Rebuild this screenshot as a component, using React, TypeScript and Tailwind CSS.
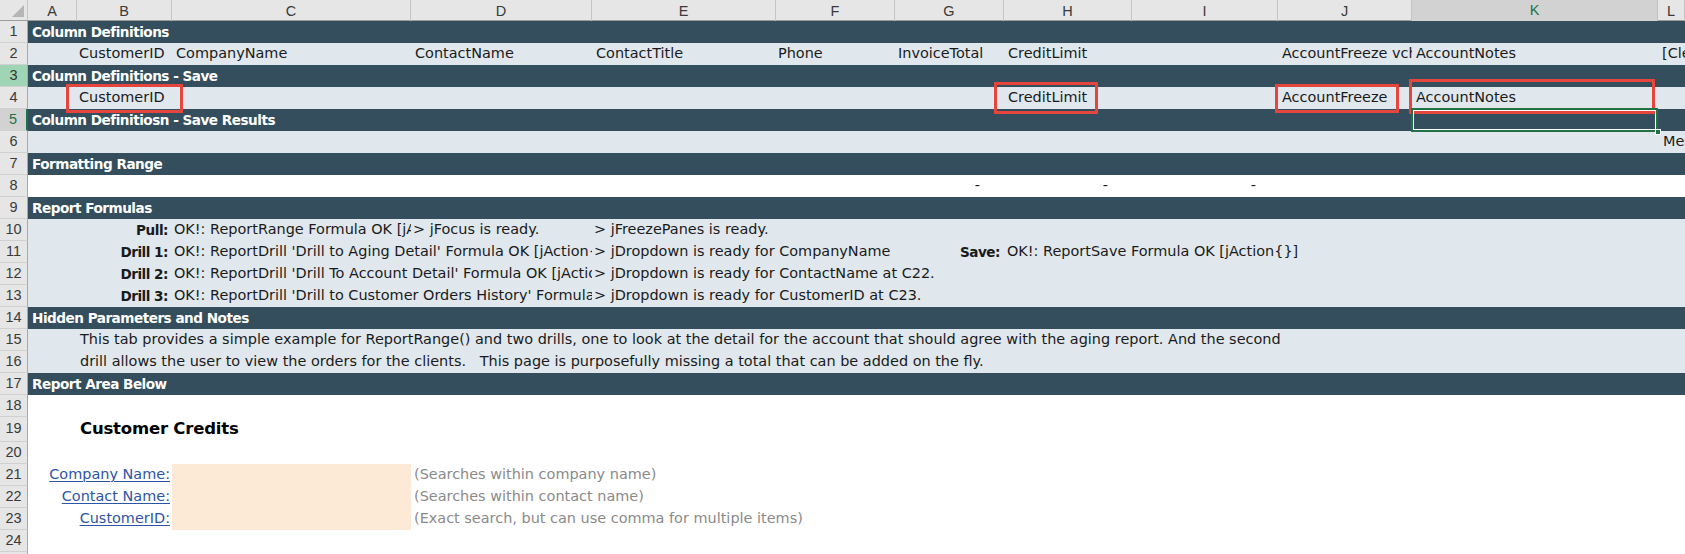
import React from "react";

const COLS =
  "grid grid-cols-[49px_95px_239px_181px_184px_119px_109px_128px_146px_134px_246px_1fr]";

const DARK = "bg-[#344e5d]";
const LIGHT = "bg-[#e0e8ee]";
const WHITE = "bg-white";

function Row({
  n,
  bg,
  h = "h-[22px]",
  numCls = "bg-[#e6e6e6] text-[#3a3a3a]",
  children,
}: {
  n: number;
  bg: string;
  h?: string;
  numCls?: string;
  children?: React.ReactNode;
}) {
  return (
    <div className={`flex ${h}`}>
      <div
        className={`w-[28px] shrink-0 flex items-center justify-center border-b border-b-[#d0d0d0] border-r border-r-[#a8a8a8] font-['Liberation_Sans',sans-serif] text-[14.5px] ${numCls}`}
      >
        {n}
      </div>
      <div className={`${COLS} flex-1 ${bg}`}>{children}</div>
    </div>
  );
}

function Cell({
  cls,
  children,
}: {
  cls: string;
  children?: React.ReactNode;
}) {
  return (
    <div className={`flex items-center overflow-hidden whitespace-pre ${cls}`}>
      {children}
    </div>
  );
}

function Head({ children }: { children: React.ReactNode }) {
  return (
    <Cell cls="col-start-1 col-span-12 pl-[4px] text-white font-bold text-[13.6px] tracking-[-0.5px]">
      {children}
    </Cell>
  );
}

const LETTERS = ["A", "B", "C", "D", "E", "F", "G", "H", "I", "J", "K", "L"];

export default function App() {
  return (
    <div className="relative w-[1685px] h-[554px] overflow-hidden bg-white font-['DejaVu_Sans',sans-serif] text-[14.45px] text-[#1a1a1a]">
      {/* Column header */}
      <div className="flex h-[21px] border-b border-b-[#9c9c9c] bg-[#e6e6e6]">
        <div className="w-[28px] shrink-0 border-r border-r-[#c4c4c4] relative">
          <svg className="absolute right-[3px] bottom-[3px]" width="12" height="12" viewBox="0 0 12 12">
            <polygon points="12,0 12,12 0,12" fill="#b5b5b5" />
          </svg>
        </div>
        <div className={`${COLS} flex-1`}>
          {LETTERS.map((l) =>
            l === "K" ? (
              <div
                key={l}
                className="flex items-center justify-center bg-[#d2d2d2] text-[#217346] border-r border-r-[#c4c4c4] border-b-2 border-b-[#217346] font-['Liberation_Sans',sans-serif] text-[14.5px]"
              >
                {l}
              </div>
            ) : (
              <div
                key={l}
                className="flex items-center justify-center text-[#3a3a3a] border-r border-r-[#c4c4c4] font-['Liberation_Sans',sans-serif] text-[14.5px]"
              >
                {l}
              </div>
            )
          )}
        </div>
      </div>

      <Row n={1} bg={DARK}>
        <Head>Column Definitions</Head>
      </Row>
      <Row n={2} bg={LIGHT}>
        <Cell cls="col-start-2 pl-[2px]">CustomerID</Cell>
        <Cell cls="col-start-3 pl-[4px]">CompanyName</Cell>
        <Cell cls="col-start-4 pl-[4px]">ContactName</Cell>
        <Cell cls="col-start-5 pl-[4px]">ContactTitle</Cell>
        <Cell cls="col-start-6 pl-[2px]">Phone</Cell>
        <Cell cls="col-start-7 pl-[3px]">InvoiceTotal</Cell>
        <Cell cls="col-start-8 pl-[4px]">CreditLimit</Cell>
        <Cell cls="col-start-10 pl-[4px]">AccountFreeze vchar</Cell>
        <Cell cls="col-start-11 pl-[4px]">AccountNotes</Cell>
        <Cell cls="col-start-12 pl-[4px]">[Clear]</Cell>
      </Row>
      <Row n={3} bg={DARK} numCls="bg-[#9fd5b5] text-[#333]">
        <Head>Column Definitions - Save</Head>
      </Row>
      <Row n={4} bg={LIGHT}>
        <Cell cls="col-start-2 pl-[2px]">CustomerID</Cell>
        <Cell cls="col-start-8 pl-[4px]">CreditLimit</Cell>
        <Cell cls="col-start-10 pl-[4px]">AccountFreeze</Cell>
        <Cell cls="col-start-11 pl-[4px]">AccountNotes</Cell>
      </Row>
      <Row
        n={5}
        bg={DARK}
        numCls="bg-[#d2d2d2] text-[#217346] border-r-2 !border-r-[#217346]"
      >
        <Head>Column Definitiosn - Save Results</Head>
      </Row>
      <Row n={6} bg={LIGHT}>
        <Cell cls="col-start-12 pl-[5px]">Message</Cell>
      </Row>
      <Row n={7} bg={DARK}>
        <Head>Formatting Range</Head>
      </Row>
      <Row n={8} bg={WHITE}>
        <Cell cls="col-start-7 justify-end pr-[24px]">-</Cell>
        <Cell cls="col-start-8 justify-end pr-[24px]">-</Cell>
        <Cell cls="col-start-9 justify-end pr-[22px]">-</Cell>
      </Row>
      <Row n={9} bg={DARK}>
        <Head>Report Formulas</Head>
      </Row>
      <Row n={10} bg={LIGHT}>
        <Cell cls="col-start-1 col-span-2 justify-end pr-[4px] font-bold text-[13.6px] tracking-[-0.5px]">Pull:</Cell>
        <Cell cls="col-start-3 pl-[2px]">OK!: ReportRange Formula OK [jAction{"{}"}]</Cell>
        <Cell cls="col-start-4 pl-[2px]">{"> jFocus is ready."}</Cell>
        <Cell cls="col-start-5 col-span-2 pl-[2px]">{"> jFreezePanes is ready."}</Cell>
      </Row>
      <Row n={11} bg={LIGHT}>
        <Cell cls="col-start-1 col-span-2 justify-end pr-[4px] font-bold text-[13.6px] tracking-[-0.5px]">Drill 1:</Cell>
        <Cell cls="col-start-3 col-span-2 pl-[2px]">OK!: ReportDrill 'Drill to Aging Detail' Formula OK [jAction{"{}"}]</Cell>
        <Cell cls="col-start-5 col-span-2 pl-[2px]">{"> jDropdown is ready for CompanyName"}</Cell>
        <Cell cls="col-start-7 justify-end pr-[4px] font-bold text-[13.6px] tracking-[-0.5px]">Save:</Cell>
        <Cell cls="col-start-8 col-span-5 pl-[3px]">OK!: ReportSave Formula OK [jAction{"{}"}]</Cell>
      </Row>
      <Row n={12} bg={LIGHT}>
        <Cell cls="col-start-1 col-span-2 justify-end pr-[4px] font-bold text-[13.6px] tracking-[-0.5px]">Drill 2:</Cell>
        <Cell cls="col-start-3 col-span-2 pl-[2px]">OK!: ReportDrill 'Drill To Account Detail' Formula OK [jAction{"{}"}]</Cell>
        <Cell cls="col-start-5 col-span-3 pl-[2px]">{"> jDropdown is ready for ContactName at C22."}</Cell>
      </Row>
      <Row n={13} bg={LIGHT}>
        <Cell cls="col-start-1 col-span-2 justify-end pr-[4px] font-bold text-[13.6px] tracking-[-0.5px]">Drill 3:</Cell>
        <Cell cls="col-start-3 col-span-2 pl-[2px]">OK!: ReportDrill 'Drill to Customer Orders History' Formula OK [jAction{"{}"}]</Cell>
        <Cell cls="col-start-5 col-span-3 pl-[2px]">{"> jDropdown is ready for CustomerID at C23."}</Cell>
      </Row>
      <Row n={14} bg={DARK}>
        <Head>Hidden Parameters and Notes</Head>
      </Row>
      <Row n={15} bg={LIGHT}>
        <Cell cls="col-start-2 col-span-11 pl-[3px]">
          This tab provides a simple example for ReportRange() and two drills, one to look at the detail for the account that should agree with the aging report. And the second
        </Cell>
      </Row>
      <Row n={16} bg={LIGHT}>
        <Cell cls="col-start-2 col-span-11 pl-[3px]">
          {"drill allows the user to view the orders for the clients.   This page is purposefully missing a total that can be added on the fly."}
        </Cell>
      </Row>
      <Row n={17} bg={DARK}>
        <Head>Report Area Below</Head>
      </Row>
      <Row n={18} bg={WHITE} />
      <Row n={19} bg={WHITE} h="h-[25px]">
        <Cell cls="col-start-2 col-span-3 pl-[3px] font-bold text-[16.5px] tracking-[-0.2px] text-black">
          Customer Credits
        </Cell>
      </Row>
      <Row n={20} bg={WHITE} />
      {[
        ["Company Name:", "(Searches within company name)"],
        ["Contact Name:", "(Searches within contact name)"],
        ["CustomerID:", "(Exact search, but can use comma for multiple items)"],
      ].map(([label, hint], i) => (
        <Row key={label} n={21 + i} bg={WHITE}>
          <Cell cls="col-start-1 col-span-2 justify-end pr-[2px]">
            <span className="underline text-[#2e54a5] decoration-1 underline-offset-2">{label}</span>
          </Cell>
          <div className="col-start-3 bg-[#fdead6]" />
          <Cell cls="col-start-4 col-span-3 pl-[3px] text-[#8a8a8a]">{hint}</Cell>
        </Row>
      ))}
      <Row n={24} bg={WHITE} />
      <Row n={25} bg={WHITE} />

      {/* red annotation boxes */}
      <div className="absolute left-[66px] top-[84px] w-[117px] h-[29px] border-[3px] border-[#e5453c]" />
      <div className="absolute left-[994px] top-[82px] w-[104px] h-[32px] border-[3px] border-[#e5453c]" />
      <div className="absolute left-[1275px] top-[84px] w-[124px] h-[29px] border-[3px] border-[#e5453c]" />
      <div className="absolute left-[1409px] top-[79px] w-[246px] h-[35px] border-[3px] border-[#e5453c]" />

      {/* selected cell K5 */}
      <div className="absolute left-[1411px] top-[108px] w-[247px] h-[24px] border-2 border-[#217346]">
        <div className="absolute inset-0 border border-white" />
      </div>
      <div className="absolute left-[1655px] top-[129px] w-[6px] h-[6px] bg-[#217346] border border-white" />
    </div>
  );
}
